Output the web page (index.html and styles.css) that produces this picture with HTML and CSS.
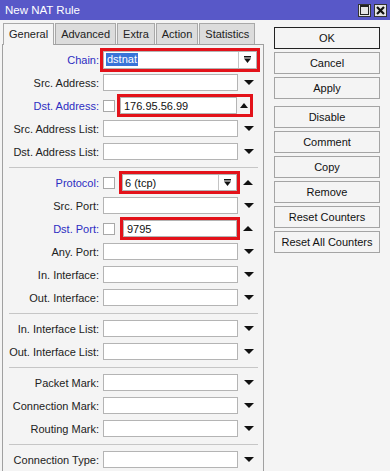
FILE: index.html
```html
<!DOCTYPE html>
<html>
<head>
<meta charset="utf-8">
<link rel="stylesheet" href="styles.css">
</head>
<body>
<div class="win">
  <div class="title">
    <span class="title-text">New NAT Rule</span>
    <div class="wbtns">
      <span class="wb"><span class="sq"></span></span>
      <span class="wb"><svg width="9" height="9" viewBox="0 0 9 9"><path d="M1 1 L8 8 M8 1 L1 8" stroke="#111" stroke-width="2.2"/></svg></span>
    </div>
  </div>
  <div class="main">
    <div class="left">
      <div class="tabs">
        <div class="tab active">General</div>
        <div class="tab">Advanced</div>
        <div class="tab">Extra</div>
        <div class="tab">Action</div>
        <div class="tab">Statistics</div>
      </div>
      <div class="panel">
        <div class="row">
          <span class="lbl blue">Chain:</span>
          <div class="fld">
            <div class="sel chain mark">
              <span class="txt"><span class="hl">dstnat</span></span>
              <span class="ddb"><svg width="7" height="7" viewBox="0 0 7 7"><rect x="0" y="0" width="7" height="1.5" fill="#111"/><polygon points="0,2.5 7,2.5 3.5,7" fill="#111"/></svg></span>
            </div>
          </div>
        </div>
        <div class="row">
          <span class="lbl">Src. Address:</span>
          <div class="fld"><span class="box"></span><span class="arr dn"></span></div>
        </div>
        <div class="row">
          <span class="lbl blue">Dst. Address:</span>
          <div class="fld">
            <span class="cb cb-a"></span>
            <div class="grp mark">
              <span class="box w-addr">176.95.56.99</span><span class="arr up small"></span>
            </div>
          </div>
        </div>
        <div class="row">
          <span class="lbl">Src. Address List:</span>
          <div class="fld"><span class="box"></span><span class="arr dn"></span></div>
        </div>
        <div class="row">
          <span class="lbl">Dst. Address List:</span>
          <div class="fld"><span class="box"></span><span class="arr dn"></span></div>
        </div>
        <div class="sep"></div>
        <div class="row">
          <span class="lbl blue">Protocol:</span>
          <div class="fld">
            <span class="cb cb-p"></span>
            <div class="sel proto mark">
              <span class="txt">6 (tcp)</span>
              <span class="ddb"><svg width="7" height="7" viewBox="0 0 7 7"><rect x="0" y="0" width="7" height="1.5" fill="#111"/><polygon points="0,2.5 7,2.5 3.5,7" fill="#111"/></svg></span>
            </div>
            <span class="arr up"></span>
          </div>
        </div>
        <div class="row">
          <span class="lbl">Src. Port:</span>
          <div class="fld"><span class="box"></span><span class="arr dn"></span></div>
        </div>
        <div class="row">
          <span class="lbl blue">Dst. Port:</span>
          <div class="fld">
            <span class="cb cb-d"></span>
            <span class="box w-port mark">9795</span>
            <span class="arr up"></span>
          </div>
        </div>
        <div class="row">
          <span class="lbl">Any. Port:</span>
          <div class="fld"><span class="box"></span><span class="arr dn"></span></div>
        </div>
        <div class="row">
          <span class="lbl">In. Interface:</span>
          <div class="fld"><span class="box"></span><span class="arr dn"></span></div>
        </div>
        <div class="row">
          <span class="lbl">Out. Interface:</span>
          <div class="fld"><span class="box"></span><span class="arr dn"></span></div>
        </div>
        <div class="sep"></div>
        <div class="row">
          <span class="lbl">In. Interface List:</span>
          <div class="fld"><span class="box"></span><span class="arr dn"></span></div>
        </div>
        <div class="row">
          <span class="lbl">Out. Interface List:</span>
          <div class="fld"><span class="box"></span><span class="arr dn"></span></div>
        </div>
        <div class="sep"></div>
        <div class="row">
          <span class="lbl">Packet Mark:</span>
          <div class="fld"><span class="box"></span><span class="arr dn"></span></div>
        </div>
        <div class="row">
          <span class="lbl">Connection Mark:</span>
          <div class="fld"><span class="box"></span><span class="arr dn"></span></div>
        </div>
        <div class="row">
          <span class="lbl">Routing Mark:</span>
          <div class="fld"><span class="box"></span><span class="arr dn"></span></div>
        </div>
        <div class="sep"></div>
        <div class="row">
          <span class="lbl">Connection Type:</span>
          <div class="fld"><span class="box"></span><span class="arr dn"></span></div>
        </div>
      </div>
    </div>
    <div class="right">
      <div class="btn ok">OK</div>
      <div class="btn">Cancel</div>
      <div class="btn">Apply</div>
      <div class="btn gap">Disable</div>
      <div class="btn">Comment</div>
      <div class="btn">Copy</div>
      <div class="btn">Remove</div>
      <div class="btn">Reset Counters</div>
      <div class="btn">Reset All Counters</div>
    </div>
  </div>
</div>
</body>
</html>
```

FILE: styles.css
```css
html, body {
  margin: 0;
  padding: 0;
  background: #f4f4f4;
  overflow: hidden;
}
body {
  font-family: "Liberation Sans", Arial, sans-serif;
  font-size: 11px;
  color: #222;
}
.win {
  width: 390px;
  height: 471px;
  overflow: hidden;
  background: #f4f4f4;
}
.title {
  height: 20px;
  background: #5858c8;
  display: flex;
  align-items: center;
  justify-content: space-between;
  padding: 0 3px 0 5px;
}
.title-text {
  color: #fff;
  font-size: 11.5px;
}
.wbtns {
  display: flex;
  gap: 3px;
}
.wb {
  width: 13px;
  height: 13px;
  background: #e4e4e4;
  border: 1px solid #333;
  box-sizing: border-box;
  display: flex;
  align-items: center;
  justify-content: center;
}
.sq {
  width: 7px;
  height: 7px;
  border: 1px solid #222;
  border-top-width: 2px;
}
.main {
  display: flex;
  align-items: flex-start;
}
.left {
  margin-left: 2px;
  width: 262px;
}
.tabs {
  display: flex;
  margin-top: 3px;
  padding-left: 1px;
  gap: 1px;
}
.tab {
  height: 21px;
  box-sizing: border-box;
  border: 1px solid #a8a8a8;
  border-bottom: none;
  background: #dcdcdc;
  padding: 0 5px;
  line-height: 20px;
  color: #222;
}
.tab.active {
  background: #f4f4f4;
  height: 22px;
  margin-bottom: -1px;
  position: relative;
  padding: 0 5px;
}
.panel {
  border: 1px solid #a0a0a0;
  border-bottom: none;
  height: 440px;
  box-sizing: border-box;
  padding-top: 3px;
}
.row {
  display: flex;
  align-items: center;
  height: 23px;
}
.lbl {
  width: 97px;
  box-sizing: border-box;
  padding-right: 1px;
  text-align: right;
  white-space: nowrap;
  color: #222;
}
.lbl.blue {
  color: #2d2dc2;
}
.fld {
  display: flex;
  align-items: center;
  margin-left: 3px;
}
.box {
  width: 135px;
  height: 17px;
  border: 1px solid #b4b4b4;
  background: #fff;
  box-sizing: border-box;
  display: flex;
  align-items: center;
  padding-left: 3px;
  color: #111;
}
.arr {
  width: 18px;
  height: 17px;
  margin-left: 2px;
  display: flex;
  align-items: center;
  justify-content: center;
}
.arr.dn::before {
  content: "";
  border-left: 5px solid transparent;
  border-right: 5px solid transparent;
  border-top: 5px solid #111;
}
.arr.up::before {
  content: "";
  border-left: 5px solid transparent;
  border-right: 5px solid transparent;
  border-bottom: 5px solid #111;
}
.arr.small {
  width: 13px;
  margin-left: 0;
}
.arr.small::before {
  border-left-width: 4px;
  border-right-width: 4px;
}
.mark {
  outline: 3px solid #e3121a;
}
.cb {
  width: 12px;
  height: 12px;
  border: 1px solid #a8a8a8;
  background: #fff;
  box-sizing: border-box;
}
.cb-a { margin-right: 5px; }
.cb-p { margin-right: 7px; }
.cb-d { margin-right: 8px; }
.grp {
  display: flex;
  align-items: center;
  height: 17px;
}
.w-addr {
  width: 117px;
}
.w-port {
  width: 114px;
}
.sel {
  display: flex;
  align-items: stretch;
  height: 17px;
  border: 1px solid #b4b4b4;
  background: #fff;
  box-sizing: border-box;
}
.sel.chain {
  width: 154px;
  height: 18px;
}
.sel.proto {
  width: 115px;
}
.txt {
  flex: 1;
  display: flex;
  align-items: center;
  padding-left: 2px;
  color: #111;
}
.hl {
  background: #3874d8;
  color: #fff;
  padding: 0 1px;
  line-height: 13px;
}
.ddb {
  width: 17px;
  border-left: 1px solid #c4c4c4;
  display: flex;
  align-items: center;
  justify-content: center;
}
.sep {
  height: 8px;
  display: flex;
  align-items: center;
  padding: 0 5px 0 6px;
}
.sep::before {
  content: "";
  flex: 1;
  height: 1px;
  background: #c6c6c6;
}
.right {
  margin-left: 10px;
  padding-top: 7px;
  display: flex;
  flex-direction: column;
  gap: 3px;
}
.btn {
  width: 106px;
  height: 22px;
  box-sizing: border-box;
  border: 1px solid #a4a4a4;
  background: #f4f4f4;
  display: flex;
  align-items: center;
  justify-content: center;
  color: #111;
}
.btn.ok {
  border-color: #222;
}
.btn.gap {
  margin-top: 4px;
}
```
